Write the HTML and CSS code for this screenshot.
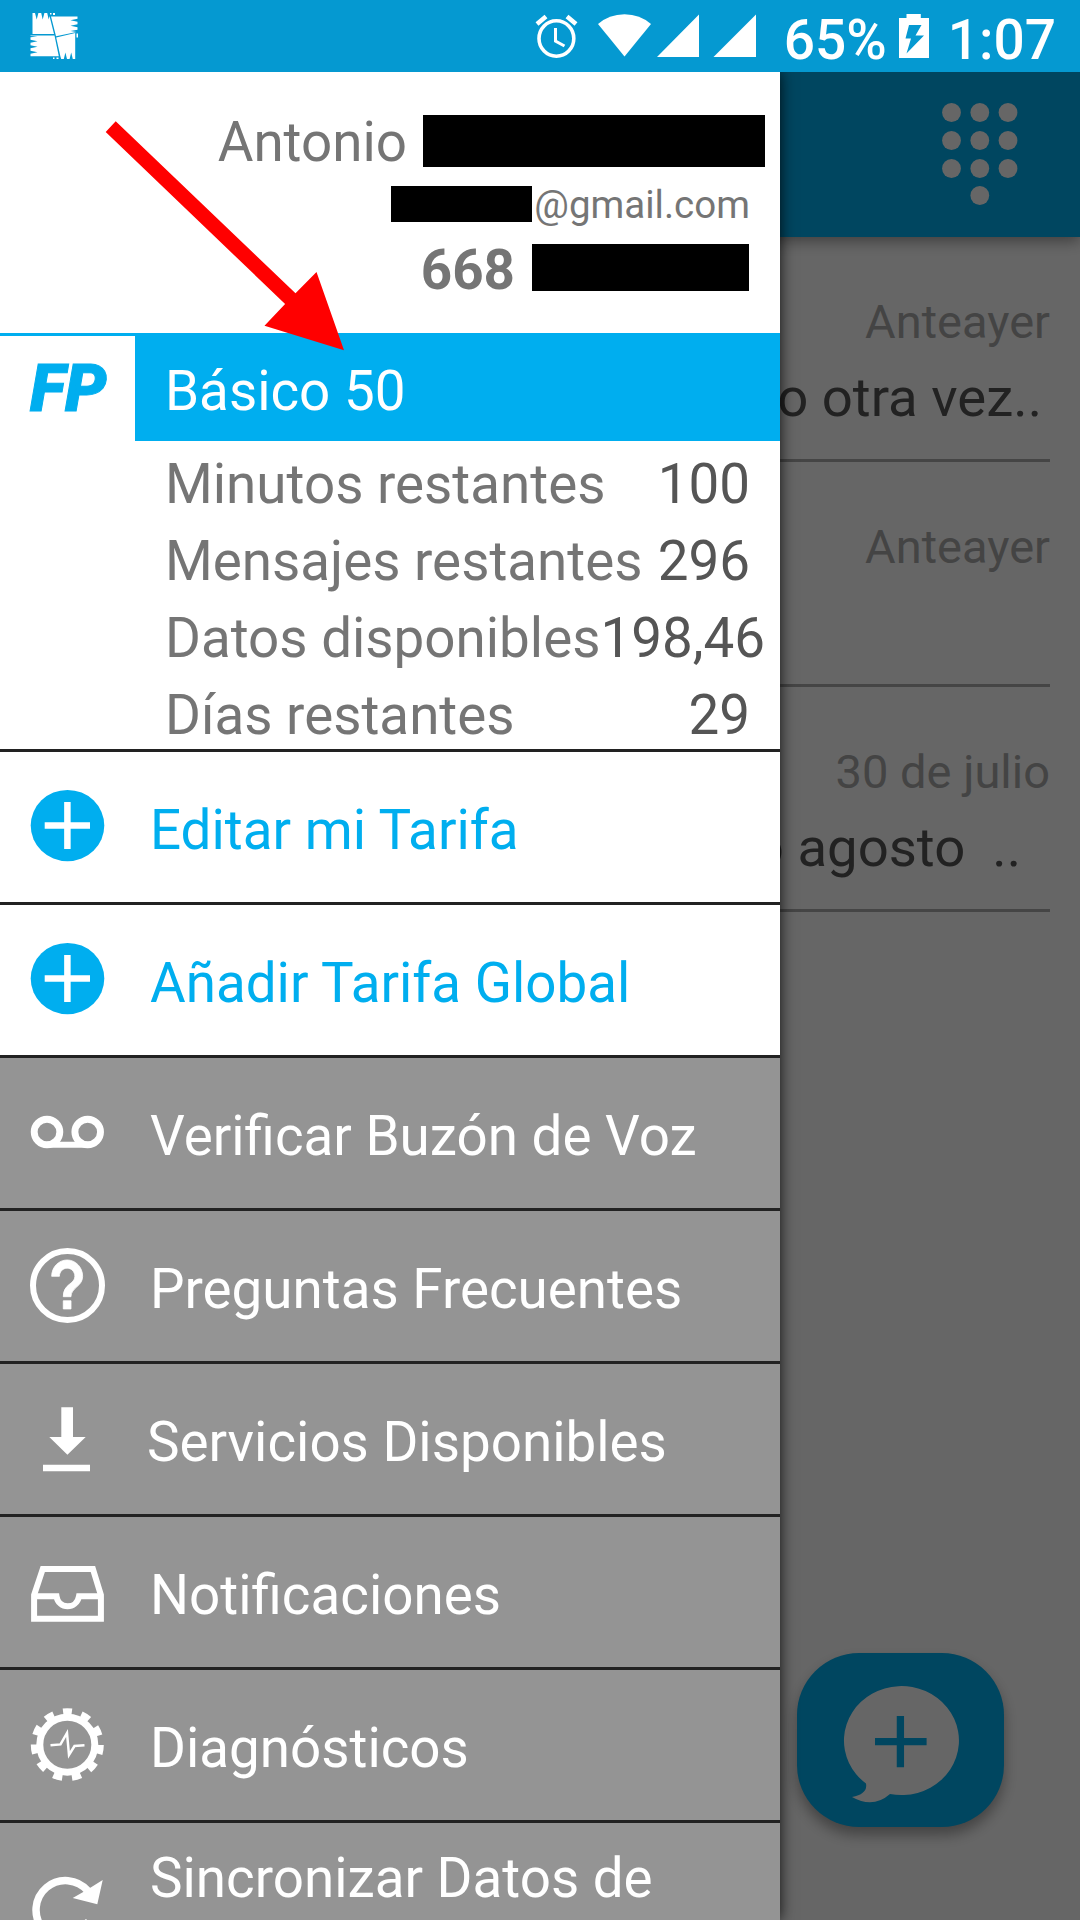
FILE: index.html
```html
<!DOCTYPE html>
<html lang="es">
<head>
    <meta charset="UTF-8">
    <meta name="viewport" content="width=device-width, initial-scale=1.0">
    <title>Mi cuenta</title>
    <link rel="stylesheet" href="styles.css">
</head>
<body>
    <header class="status-bar">
        <svg class="status-app" width="48" height="48" viewBox="0 0 48 48" fill="#fff">
            <path d="M2.500 1h2.500l1.700 6.500L8.400 1h2.800l1.500 6.500L14.400 1h2.800l1.500 6.500L19.500 4l4.500 18H2.500z"/>
            <path d="M20 1h1.500v1.500H20zM23 1h2v2h-2z"/>
            <path d="M21 4.500h26.500v2.300L40.500 8.300l7 1.500v2.500L40.500 13.800l7 1.500v2.500l-7 1.200 6 1L26 24.300z"/>
            <path d="M.5 23.500h24l4.300 20.800H.5v-2.500l7-1.500-7-1.500v-2.500l7-1.500-7-1.500v-2.500l7-1.500-7-1.500v-2.500l7-.8-7-.5z"/>
            <path d="M26.200 25.600l19-4.500V47h-2.400l-1.600-6.500-1.600 6.500h-2.600l-1.600-6.500-1.600 6.500h-2.600l-.9-3z"/>
            <path d="M23 45.500h1.500V47H23zM26.500 45.500h2V47h-2zM46.500 21.500H48v4h-1.500z"/>
        </svg>
        <div class="status-right">
            <svg width="222" height="46" viewBox="535 13 222 46" fill="#fff">
                <ellipse cx="556.4" cy="38.5" rx="17.4" ry="17.7" fill="none" stroke="#fff" stroke-width="3.6"/>
                <path d="M555.5 28v13l9 5" fill="none" stroke="#fff" stroke-width="3"/>
                <path d="M537 24l9-7.500M576 24l-9-7.500" fill="none" stroke="#fff" stroke-width="4.500"/>
                <path d="M598 24Q609 14.500 624.500 14.300Q640 14.500 651 24L624.500 56.500z"/>
                <path d="M699 14.500V57h-42zM756 14.500V57h-42.500z"/>
            </svg>
            <span class="battery-text">65%</span>
            <svg class="battery" width="30" height="44" viewBox="0 0 30 44">
                <path d="M0 4h7.500V0h14.300v4H30v40H0z" fill="#fff"/>
                <path d="M10 11h12.500l-6 10.500h8.500L7.500 39.500 12 24.500H6.500z" fill="#0599d1"/>
            </svg>
            <span class="clock">1:07</span>
        </div>
    </header>

    <div class="screen">
        <main class="inbox">
            <div class="app-bar">
                <svg width="76" height="104" viewBox="0 0 76 104" fill="#fff">
                    <circle cx="9.500" cy="9.500" r="9.400"/><circle cx="37.800" cy="9.500" r="9.400"/><circle cx="66" cy="9.500" r="9.400"/>
                    <circle cx="9.500" cy="37.500" r="9.400"/><circle cx="37.800" cy="37.500" r="9.400"/><circle cx="66" cy="37.500" r="9.400"/>
                    <circle cx="9.500" cy="65.500" r="9.400"/><circle cx="37.800" cy="65.500" r="9.400"/><circle cx="66" cy="65.500" r="9.400"/>
                    <circle cx="37.800" cy="92.500" r="9.400"/>
                </svg>
            </div>
            <div class="message">
                <div class="date">Anteayer</div>
                <div class="text">o otra vez..</div>
            </div>
            <div class="message">
                <div class="date">Anteayer</div>
                <div class="text"></div>
            </div>
            <div class="message">
                <div class="date">30 de julio</div>
                <div class="text text-short">o agosto&nbsp; ..</div>
            </div>
            <div class="new-message">
                <svg width="207" height="174" viewBox="797 1653 207 174">
                    <path d="M866 1783.500Q868 1794 852 1797Q873 1809 890 1794A57.500 54.500 0 1 0 866 1783.500z" fill="#fff"/>
                    <path d="M900.400 1716v51.300M875 1741.600h51.600" stroke="#00aeef" stroke-width="7.300"/>
                </svg>
            </div>
        </main>

        <div class="scrim"></div>

        <nav class="drawer">
            <div class="account">
                <div class="account-row name"><span>Antonio</span><i class="hidden-name"></i></div>
                <div class="account-row email"><i class="hidden-email"></i><span>@gmail.com</span></div>
                <div class="account-row phone"><span>668</span><i class="hidden-phone"></i></div>
            </div>

            <div class="plan">
                <div class="plan-logo"><span>FP</span></div>
                <div class="plan-info">
                    <div class="plan-name">Básico 50</div>
                    <div class="plan-stats">
                        <div class="stat"><span>Minutos restantes</span><b>100</b></div>
                        <div class="stat"><span>Mensajes restantes</span><b>296</b></div>
                        <div class="stat"><span>Datos disponibles</span><b>198,46</b></div>
                        <div class="stat"><span>Días restantes</span><b>29</b></div>
                    </div>
                </div>
            </div>

            <a class="item item-light">
                <svg width="75" height="76" viewBox="0 0 75 76">
                    <ellipse cx="37.500" cy="36.600" rx="36.800" ry="35.700" fill="#00aeef"/>
                    <path d="M37.400 13v47M14.700 36.600H60" stroke="#fff" stroke-width="6.500"/>
                </svg>
                <span>Editar mi Tarifa</span>
            </a>
            <a class="item item-light">
                <svg width="75" height="76" viewBox="0 0 75 76">
                    <ellipse cx="37.500" cy="36.600" rx="36.800" ry="35.700" fill="#00aeef"/>
                    <path d="M37.400 13v47M14.700 36.600H60" stroke="#fff" stroke-width="6.500"/>
                </svg>
                <span>Añadir Tarifa Global</span>
            </a>
            <a class="item">
                <svg width="75" height="76" viewBox="0 0 75 76" fill="none" stroke="#fff" stroke-width="6.900">
                    <circle cx="17" cy="37" r="12.800"/>
                    <circle cx="57.700" cy="37" r="12.800"/>
                    <path d="M17 49.800h40.700" stroke-width="6"/>
                </svg>
                <span>Verificar Buzón de Voz</span>
            </a>
            <a class="item">
                <svg width="75" height="76" viewBox="0 0 75 76">
                    <circle cx="37.500" cy="37.500" r="34.500" fill="none" stroke="#fff" stroke-width="6"/>
                    <path transform="translate(-9.300 -12.500) scale(3.870 4.080)" d="M11 18h2v-2h-2v2zm1-12c-2.210 0-4 1.790-4 4h2c0-1.100.9-2 2-2s2 .9 2 2c0 2-3 1.750-3 5h2c0-2.250 3-2.500 3-5 0-2.210-1.790-4-4-4z" fill="#fff" stroke="#fff" stroke-width=".2"/>
                </svg>
                <span>Preguntas Frecuentes</span>
            </a>
            <a class="item">
                <svg width="75" height="76" viewBox="0 0 75 76" fill="#fff">
                    <path d="M31.300 6.300H43V36h12.700L37.400 53.700 19.300 36h12zM13 63.700h47v6.600H13z"/>
                </svg>
                <span class="services">Servicios Disponibles</span>
            </a>
            <a class="item">
                <svg width="75" height="76" viewBox="0 0 75 76" fill="none" stroke="#fff" stroke-width="6">
                    <path d="M12.800 14.900h50.100L70.900 41v23.800H4.100V41z"/>
                    <path d="M4 42.200h22.500c2 13.500 20 13.500 22.500 0h22"/>
                </svg>
                <span>Notificaciones</span>
            </a>
            <a class="item">
                <svg width="75" height="76" viewBox="0 0 75 76" fill="none" stroke="#fff">
                    <circle cx="37.300" cy="37.700" r="27.500" stroke-width="7"/>
                    <circle cx="37.300" cy="37.700" r="32.500" stroke-width="8" stroke-dasharray="9 9.564" stroke-dashoffset="4.500" transform="rotate(-90 37.300 37.700)"/>
                    <path d="M20.500 38.300l10-.9L37 26l2 22 5.500-9 10-.7" stroke-width="2.500"/>
                </svg>
                <span>Diagnósticos</span>
            </a>
            <a class="item item-last">
                <svg width="75" height="76" viewBox="0 0 75 76">
                    <path d="M13 59A28.500 28.500 0 1 1 58 21" fill="none" stroke="#fff" stroke-width="7.500"/>
                    <path d="M72.700 10l-5.400 24.300L42.700 28l14-8zM56 49l6 6H48z" fill="#fff"/>
                </svg>
                <span>Sincronizar Datos de</span>
            </a>
        </nav>

        <!-- arrow pointing at the plan name -->
        <svg class="arrow" width="240" height="231" viewBox="105 120 240 231">
            <path d="M115.700 121.300L295.500 293.300 316.500 272 344 350.300 264.500 325.700 285.100 304 105.700 132z" fill="#f00"/>
        </svg>
    </div>
</body>
</html>
```
FILE: styles.css
```css
* {
    box-sizing: border-box;
}

body {
    margin: 0;
    width: 1080px;
    height: 1920px;
    overflow: hidden;
    font-family: Roboto, sans-serif;
    font-size: 54.75px;
    line-height: 63px;
    white-space: nowrap;
}

svg {
    display: block;
    flex: none;
}

.status-bar {
    height: 72px;
    padding: 0 24px 0 30px;
    display: flex;
    justify-content: space-between;
    align-items: flex-start;
    background: #0599d1;
    color: #fff;
}

.status-app {
    margin-top: 12px;
}

.status-right {
    display: flex;
    padding-top: 13px;
    font-size: 55px;
    font-weight: 500;
}

.status-right span {
    line-height: 54px;
}

.battery-text {
    margin-left: 27px;
}

.battery {
    margin: 1px 19px 0 12px;
}

.screen {
    position: relative;
    height: 1848px;
    overflow: hidden;
}

.inbox {
    height: 100%;
    background: #fff;
    display: flex;
    flex-direction: column;
}

.app-bar {
    height: 165px;
    padding: 31px 62px 0 0;
    display: flex;
    justify-content: flex-end;
    background: #00aeef;
    box-shadow: 0 4px 14px rgba(0, 0, 0, 0.4);
}

.message {
    height: 225px;
    margin-right: 30px;
    padding-top: 57px;
    border-bottom: 3px solid #adadad;
    text-align: right;
}

.date {
    font-size: 47px;
    line-height: 56px;
    color: #aaa;
}

.text {
    margin-top: 16px;
    padding-right: 8px;
    font-size: 54.5px;
    color: #555;
}

.text-short {
    padding-right: 29px;
}

.new-message {
    width: 207px;
    height: 174px;
    margin: auto 76px 93px auto;
    border-radius: 62px;
    background: #00aeef;
    box-shadow: 0 8px 14px rgba(0, 0, 0, 0.35);
}

.scrim {
    position: absolute;
    inset: 0;
    background: rgba(0, 0, 0, 0.6);
}

.drawer {
    position: absolute;
    top: 0;
    left: 0;
    width: 780px;
    height: 100%;
    background: #fff;
    box-shadow: 0 0 14px rgba(0, 0, 0, 0.85);
}

.account {
    height: 261px;
    padding-top: 43px;
    color: #757575;
}

.account-row {
    display: flex;
    justify-content: flex-end;
    align-items: center;
}

.account-row i {
    height: 100%;
    background: #000;
}

.name {
    height: 52px;
    padding-right: 15px;
    gap: 16px;
}

.name span {
    padding-top: 3px;
}

.hidden-name {
    width: 342px;
}

.email {
    height: 36px;
    margin-top: 19px;
    padding-right: 30px;
    font-size: 38.5px;
}

.email span {
    padding-top: 1px;
}

.hidden-email {
    width: 141px;
    margin-right: 2px;
}

.phone {
    height: 47px;
    margin-top: 22px;
    padding-right: 31px;
    gap: 17px;
    font-weight: bold;
}

.phone span {
    padding-top: 5px;
}

.hidden-phone {
    width: 217px;
}

.plan {
    display: flex;
    height: 416px;
    border-top: 3px solid #00aeef;
}

.plan-logo {
    width: 135px;
    padding: 20px 0 0 30px;
    font-size: 66px;
    line-height: 66px;
    font-style: italic;
    font-weight: 900;
    color: #00aeef;
    -webkit-text-stroke: 1px #00aeef;
}

.plan-info {
    flex: 1;
    min-width: 0;
}

.plan-name {
    height: 105px;
    padding: 24px 0 0 30px;
    background: #00aeef;
    color: #fff;
}

.plan-stats {
    display: flex;
    flex-direction: column;
    gap: 14px;
    padding: 12px 30px 2px;
    color: #757575;
}

.stat {
    display: flex;
    justify-content: space-between;
}

.stat b {
    font-weight: normal;
    color: #555;
}

.item {
    display: flex;
    align-items: center;
    height: 153px;
    padding-left: 30px;
    border-top: 3px solid #222;
    background: #949494;
    color: #fff;
}

.item span {
    margin-left: 45px;
    padding-top: 7px;
}

.item .services {
    margin-left: 42px;
}

.item-light {
    background: #fff;
    color: #00aeef;
}

.item-last {
    align-items: flex-start;
}

.item-last svg {
    margin-top: 47px;
}

.item-last span {
    padding-top: 24px;
}

.arrow {
    position: absolute;
    left: 105px;
    top: 48px;
}
```
